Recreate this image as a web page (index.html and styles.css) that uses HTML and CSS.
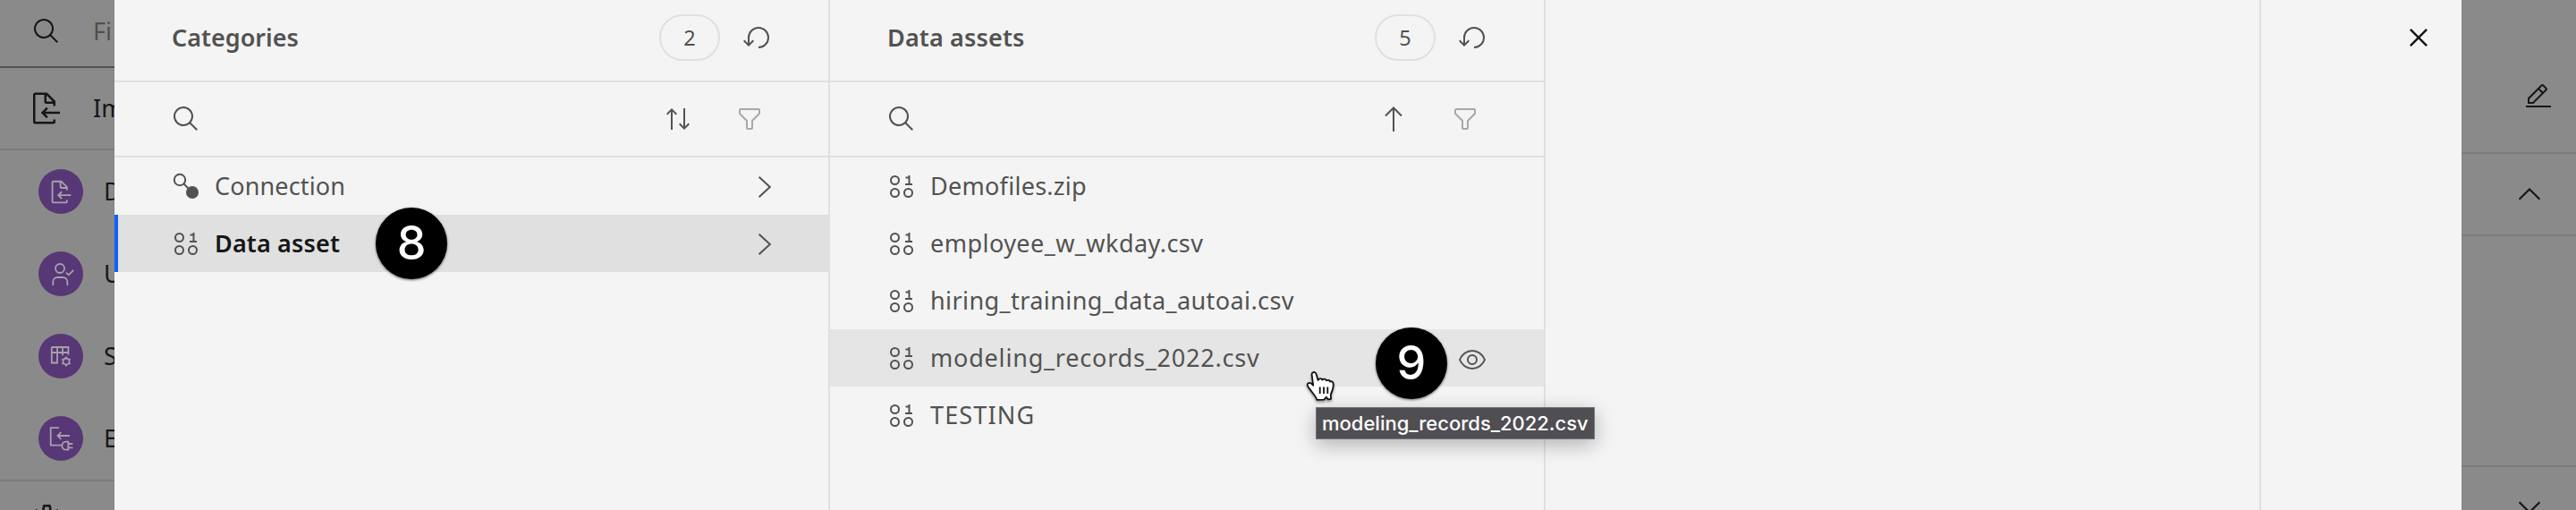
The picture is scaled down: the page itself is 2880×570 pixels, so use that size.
FILE: index.html
```
<!DOCTYPE html>
<html lang="en">
<head>
<meta charset="utf-8">
<title>Select data asset</title>
<link rel="stylesheet" href="styles.css">
</head>
<body>
<svg class="sprite" width="0" height="0" aria-hidden="true">
  <symbol id="search" viewBox="0 0 32 32"><path d="M29,27.5859l-7.5521-7.5521a11.0177,11.0177,0,1,0-1.4141,1.4141L27.5859,29ZM4,13a9,9,0,1,1,9,9A9.01,9.01,0,0,1,4,13Z"/></symbol>
  <symbol id="import" viewBox="0 0 32 32"><path d="M28 19L14.83 19 17.41 16.41 16 15 11 20 16 25 17.41 23.59 14.83 21 28 21 28 19z"/><path d="M24,14V10a1,1,0,0,0-.29-.71l-7-7A1,1,0,0,0,16,2H6A2,2,0,0,0,4,4V28a2,2,0,0,0,2,2H22a2,2,0,0,0,2-2V26H22v2H6V4h8v6a2,2,0,0,0,2,2h6v2Zm-8-4V4.41L21.59,10Z"/></symbol>
  <symbol id="reset" viewBox="0 0 32 32"><path d="M18,28A12,12,0,1,0,6,16v6.2L2.4,18.6,1,20l6,6,6-6-1.4-1.4L8,22.2V16H8A10,10,0,1,1,18,26Z"/></symbol>
  <symbol id="sort" viewBox="0 0 32 32"><path d="M27.6 20.6L24 24.2 24 4 22 4 22 24.2 18.4 20.6 17 22 23 28 29 22zM9 4L3 10 4.4 11.4 8 7.8 8 28 10 28 10 7.8 13.6 11.4 15 10z"/></symbol>
  <symbol id="up" viewBox="0 0 32 32"><path d="M16 30V3.5M7 12.5l9-9 9 9" fill="none" stroke="currentColor" stroke-width="2"/></symbol>
  <symbol id="filter" viewBox="0 0 32 32"><path d="M18,28H14a2,2,0,0,1-2-2V18.41L4.59,11A2,2,0,0,1,4,9.59V6A2,2,0,0,1,6,4H26a2,2,0,0,1,2,2V9.59A2,2,0,0,1,27.41,11L20,18.41V26A2,2,0,0,1,18,28ZM6,6V9.59l8,8V26h4V17.59l8-8V6Z"/></symbol>
  <symbol id="chevron" viewBox="0 0 32 32"><path d="M18.6 5.7L30.8 17 18.6 28.3" fill="none" stroke="currentColor" stroke-width="2"/></symbol>
  <symbol id="connection" viewBox="0 0 32 32"><path d="M13 13l6 6" stroke="currentColor" stroke-width="2"/><circle cx="9" cy="9" r="6.2" fill="none" stroke="currentColor" stroke-width="2"/><circle cx="23" cy="23" r="7"/></symbol>
  <symbol id="data" viewBox="0 0 32 32"><g fill="none" stroke="currentColor" stroke-width="2"><circle cx="8.5" cy="9.5" r="4.5"/><circle cx="8.5" cy="23.5" r="4.5"/><circle cx="23.5" cy="23.5" r="4.5"/><path d="M24.5 4v10M20 14h8M20.5 6.5h4"/></g></symbol>
  <symbol id="eye" viewBox="0 0 32 32"><path d="M30.94,15.66A16.69,16.69,0,0,0,16,5,16.69,16.69,0,0,0,1.06,15.66a1,1,0,0,0,0,.68A16.69,16.69,0,0,0,16,27,16.69,16.69,0,0,0,30.94,16.34,1,1,0,0,0,30.94,15.66ZM16,25c-5.3,0-10.9-3.93-12.93-9C5.1,10.93,10.7,7,16,7s10.9,3.93,12.93,9C26.9,21.07,21.3,25,16,25Z"/><path d="M16,10a6,6,0,1,0,6,6A6,6,0,0,0,16,10Zm0,10a4,4,0,1,1,4-4A4,4,0,0,1,16,20Z"/></symbol>
  <symbol id="close" viewBox="0 0 32 32"><path d="M24 9.4L22.6 8 16 14.6 9.4 8 8 9.4 14.6 16 8 22.6 9.4 24 16 17.4 22.6 24 24 22.6 17.4 16 24 9.4z"/></symbol>
  <symbol id="edit" viewBox="0 0 32 32"><path d="M2 26H30V28H2zM25.4 9c.8-.8.8-2 0-2.8l-3.6-3.6c-.8-.8-2-.8-2.8 0l-15 15V24h6.4L25.4 9zM20.4 4L24 7.6l-3 3L17.4 7 20.4 4zM6 22v-3.6l10-10 3.6 3.6-10 10H6z"/></symbol>
  <symbol id="caret" viewBox="0 0 32 32"><path d="M4.600 21.800l11.400-11.300 11.400 11.300" fill="none" stroke="currentColor" stroke-width="2.2"/></symbol>
  <symbol id="gear" viewBox="0 0 40 40"><path d="M16 12l1.200-6.700h6.400L24.800 12" fill="none" stroke="currentColor" stroke-width="2.6" stroke-linejoin="round"/><path d="M7 10.500l1.600-1.500 2.500 1.500zM29.500 10.500L32 9l1.500 1.500z"/></symbol>
  <symbol id="node-user" viewBox="0 0 50 50"><circle cx="24" cy="19" r="5"/><path d="M16.3 38v-4a5 5 0 0 1 5-5h6a5 5 0 0 1 5 5v4M31 23.7l2.7 2.6 5.5-5.3"/></symbol>
  <symbol id="node-table" viewBox="0 0 50 50"><path d="M14.8 15h18.6v8.500M14.800 15v17.500h6.200V15M14.800 21h18.600M27 15v9.300"/><circle cx="31" cy="31" r="3.500"/><path d="M31 27.500v-2M31 34.500v2M34 29.300l1.800-1M28 32.700l-1.800 1M34 32.700l1.800 1M28 29.300l-1.800-1"/></symbol>
  <symbol id="node-plug" viewBox="0 0 50 50"><path d="M23 13.2h-9.300v19.500h12.800M35 22H21.500M25.300 18.200L21.500 22l3.800 3.800"/><path d="M33.300 28.600v9h-2.500a4.500 4.500 0 0 1 0-9zM33.300 31h5M33.300 35.300h5"/></symbol>
</svg>

<div class="app">
  <aside class="palette">
    <div class="find"><svg class="icon"><use href="#search"/></svg><span class="find-text">Fi</span></div>
    <div class="group"><svg class="icon icon-lg"><use href="#import"/></svg><span>Im</span></div>
    <div class="nodes">
      <div class="node"><span class="disc"><svg class="doc"><use href="#import"/></svg></span><span>D</span></div>
      <div class="node"><span class="disc"><svg class="line"><use href="#node-user"/></svg></span><span>U</span></div>
      <div class="node"><span class="disc"><svg class="line"><use href="#node-table"/></svg></span><span>S</span></div>
      <div class="node"><span class="disc"><svg class="line"><use href="#node-plug"/></svg></span><span>E</span></div>
    </div>
    <div class="group-last"><svg class="icon-lg"><use href="#gear"/></svg></div>
  </aside>

  <main class="modal">
    <section class="column">
      <header class="head"><h2 class="title">Categories</h2><span class="count">2</span><svg class="icon"><use href="#reset"/></svg></header>
      <div class="tools"><svg class="icon"><use href="#search"/></svg><svg class="icon sorter"><use href="#sort"/></svg><svg class="icon muted"><use href="#filter"/></svg></div>
      <ul class="list">
        <li class="row"><svg class="icon"><use href="#connection"/></svg><span class="label t-short">Connection</span><svg class="icon"><use href="#chevron"/></svg></li>
        <li class="row selected"><svg class="icon"><use href="#data"/></svg><span class="label t-short">Data asset</span><svg class="icon"><use href="#chevron"/></svg></li>
      </ul>
    </section>
    <section class="column">
      <header class="head"><h2 class="title t-short">Data assets</h2><span class="count">5</span><svg class="icon"><use href="#reset"/></svg></header>
      <div class="tools"><svg class="icon"><use href="#search"/></svg><svg class="icon sorter"><use href="#up"/></svg><svg class="icon muted"><use href="#filter"/></svg></div>
      <ul class="list">
        <li class="row"><svg class="icon"><use href="#data"/></svg><span class="label t-demo">Demofiles.zip</span></li>
        <li class="row"><svg class="icon"><use href="#data"/></svg><span class="label t-employee">employee_w_wkday.csv</span></li>
        <li class="row"><svg class="icon"><use href="#data"/></svg><span class="label t-hiring">hiring_training_data_autoai.csv</span></li>
        <li class="row hovered"><svg class="icon"><use href="#data"/></svg><span class="label t-modeling">modeling_records_2022.csv</span><svg class="icon view"><use href="#eye"/></svg></li>
        <li class="row"><svg class="icon"><use href="#data"/></svg><span class="label t-testing">TESTING</span></li>
      </ul>
    </section>
    <section class="column"></section>
    <div class="closer"><svg class="icon-lg"><use href="#close"/></svg></div>
  </main>

  <aside class="details">
    <div class="edit"><svg class="icon"><use href="#edit"/></svg></div>
    <div class="fold"><svg class="icon"><use href="#caret"/></svg></div>
    <div class="panel"></div>
    <div class="fold-closed"><svg class="icon"><use href="#caret"/></svg></div>
  </aside>
</div>

<div class="step step-8">8</div>
<div class="step step-9">9</div>
<div class="tooltip">modeling_records_2022.csv</div>
<svg class="pointer" viewBox="0 0 32 36"><path d="M8.3 3.2c1.6-.6 2.8.4 3.3 2l2 6.8c.8-2.4 4-2.6 4.7-.4 1.2-1.6 4-1.4 4.6.7 1.3-1 3.7-.5 4.3 1.4.8-1 3-.4 3.3 1.5.5 3.5-.3 7-1.4 9.300-1 2-1.600 3.200-1.300 5l.3 3.300-3.400.500-1.900-2.500-2.500 2.800-8 .200c-.8-3-2.500-5-4.500-7.300-2-2.300-3.300-4.700-5-6.800-1.700-2.200-1.500-4 .2-4.600 1.900-.7 3.800.7 5.200 2.700L6.800 7c-.6-1.800-.1-3.200 1.500-3.800z"/><path class="bars" d="M15.700 19.500v7.500M20 19.500v7.500M24.300 19.500v7.500"/></svg>
</body>
</html>
```
FILE: styles.css
```
* { box-sizing: border-box; }
html { height: 570px; overflow: hidden; }
body {
  margin: 0;
  width: 2880px;
  height: 570px;
  overflow: hidden;
  position: relative;
  font: 27px/36px "Noto Sans", sans-serif;
  color: #525252;
}
svg { display: block; fill: currentColor; flex: none; }
.sprite { position: absolute; }
.icon { width: 32px; height: 32px; }
.icon-lg { width: 40px; height: 40px; }

.app { display: flex; height: 570px; overflow: hidden; background: #8a8a8a; }

.palette { width: 128px; height: 570px; overflow: hidden; color: #161616; white-space: nowrap; }
.find { display: flex; height: 76px; padding: 17px 0 0 36px; gap: 36px; border-bottom: 2px solid #525252; }
.find .icon { margin-top: 2px; }
.find-text { color: #505050; }
.group { display: flex; align-items: center; height: 92px; padding-left: 32px; gap: 32px; border-bottom: 2px solid #7c7c7c; }
.nodes { height: 370px; border-bottom: 2px solid #7c7c7c; }
.node { display: flex; align-items: center; height: 92px; padding-left: 43px; gap: 23px; }
.disc { display: flex; align-items: center; justify-content: center; flex: none; width: 50px; height: 50px; border-radius: 50%; background: #573775; color: #a6a2aa; }
.doc { width: 29px; height: 29px; }
.line { width: 50px; height: 50px; fill: none; stroke: currentColor; stroke-width: 1.8; }
.group-last { height: 32px; overflow: hidden; padding: 22px 0 0 32px; }

.modal { display: flex; width: 2624px; background: #f4f4f4; }
.column { width: 800px; border-right: 2px solid #e0e0e0; }
.head { display: flex; align-items: center; height: 92px; padding: 0 64px 6px; border-bottom: 2px solid #e0e0e0; }
.title { flex: 1; margin: 0; font-size: 27px; line-height: 36px; font-weight: 600; }
.count { display: flex; align-items: center; justify-content: center; width: 68px; height: 52px; margin-right: 25px; border: 2px solid #e0e0e0; border-radius: 26px; font-size: 23.5px; }
.tools { display: flex; align-items: center; height: 84px; padding: 0 72px 0 64px; border-bottom: 2px solid #e0e0e0; }
.sorter { margin-left: auto; margin-right: 48px; }
.muted { color: #a8a8a8; }
.list { list-style: none; margin: 0; padding: 0; }
.row { display: flex; align-items: center; height: 64px; padding: 0 64px; gap: 16px; }
.label { flex: 1; white-space: nowrap; }
.selected { width: 800px; padding-left: 60px; padding-right: 66px; border-left: 4px solid #0f62fe; background: #e0e0e0; }
.selected .label { color: #161616; font-weight: 600; }
.hovered { background: #e5e5e5; }
.view { margin-top: 4px; }
.closer { flex: 1; display: flex; justify-content: flex-end; padding: 22px 28px 0 0; color: #161616; }

.t-short { letter-spacing: 0.15px; }
.t-demo { letter-spacing: 0.27px; }
.t-employee { letter-spacing: 0.46px; }
.t-hiring { letter-spacing: 0.42px; }
.t-modeling { letter-spacing: 0.8px; }
.t-testing { letter-spacing: 1.15px; }

.details { width: 128px; height: 570px; overflow: hidden; color: #161616; }
.edit { height: 172px; padding: 92px 0 0 70px; border-bottom: 2px solid #7c7c7c; }
.fold { height: 92px; padding: 29px 0 0 60px; border-bottom: 2px solid #7c7c7c; }
.panel { height: 258px; border-bottom: 2px solid #7c7c7c; }
.fold-closed { height: 48px; overflow: hidden; padding: 29px 0 0 60px; }
.fold-closed .icon { transform: rotate(180deg); }

.step { position: absolute; width: 80px; height: 80px; border-radius: 50%; background: #000; color: #fff; text-align: center; font: 500 52px/80px Inter, sans-serif; box-shadow: 0 1px 3px rgba(0,0,0,.6); }
.step-8 { left: 420px; top: 232px; }
.step-9 { left: 1538px; top: 366px; }
.tooltip { position: absolute; left: 1471px; top: 455px; width: 312px; height: 36px; padding-left: 6px; border: 1px solid #747277; background: #504e53; color: #fff; font: 500 22px/34px Inter, sans-serif; white-space: nowrap; box-shadow: 0 6px 22px rgba(0,0,0,.28); }
.pointer { position: absolute; left: 1460px; top: 413px; width: 32px; height: 36px; overflow: visible; fill: #fff; stroke: #111; stroke-width: 1.8; stroke-linejoin: round; filter: drop-shadow(0 2px 1.5px rgba(0,0,0,.4)); }
.bars { fill: none; }
```
